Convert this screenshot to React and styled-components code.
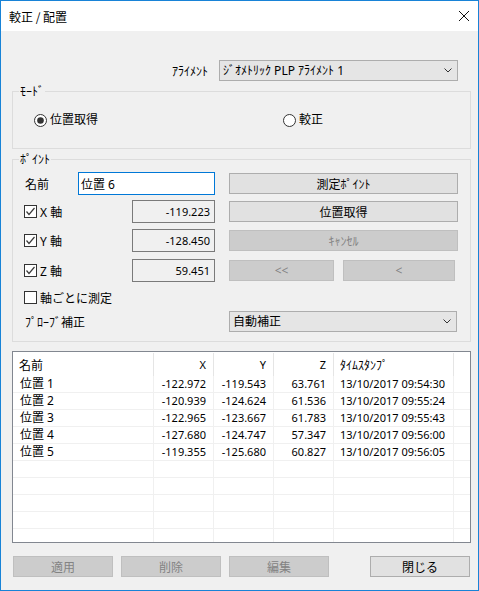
import React from "react"
import styled, { createGlobalStyle } from "styled-components"

const points = [
  { name: "位置 1", x: "-122.972", y: "-119.543", z: "63.761", time: "13/10/2017 09:54:30" },
  { name: "位置 2", x: "-120.939", y: "-124.624", z: "61.536", time: "13/10/2017 09:55:24" },
  { name: "位置 3", x: "-122.965", y: "-123.667", z: "61.783", time: "13/10/2017 09:55:43" },
  { name: "位置 4", x: "-127.680", y: "-124.747", z: "57.347", time: "13/10/2017 09:56:00" },
  { name: "位置 5", x: "-119.355", y: "-125.680", z: "60.827", time: "13/10/2017 09:56:05" },
]

const axes = [
  { label: "X 軸", value: "-119.223" },
  { label: "Y 軸", value: "-128.450" },
  { label: "Z 軸", value: "59.451" },
]

const Chevron = () => (
  <svg width="8" height="5" viewBox="0 0 8 5">
    <polyline points="0.5,0.5 4,4 7.5,0.5" fill="none" stroke="#333" strokeWidth="1" />
  </svg>
)

const CloseIcon = () => (
  <svg width="10" height="10" viewBox="0 0 10 10">
    <path d="M0 0 L10 10 M10 0 L0 10" stroke="#111" strokeWidth="1" />
  </svg>
)

const Check = ({ checked }) => (
  <CheckBox>
    {checked && (
      <svg width="11" height="11" viewBox="0 0 11 11">
        <polyline points="1.5,5.5 4,8.5 9.5,2" fill="none" stroke="#3a3a3a" strokeWidth="1.2" />
      </svg>
    )}
  </CheckBox>
)

const Radio = ({ checked }) => (
  <svg width="13" height="13" viewBox="0 0 13 13">
    <circle cx="6.5" cy="6.5" r="6" fill="#fff" stroke="#333" strokeWidth="1" />
    {checked && <circle cx="6.5" cy="6.5" r="3.3" fill="#333" />}
  </svg>
)

const App = () => {
  const empty = Array.from({ length: 6 })
  return (
    <Window>
      <GlobalStyle />
      <TitleBar>
        <span>較正 / 配置</span>
        <CloseIcon />
      </TitleBar>
      <Body>
        <AlignRow>
          <span>ｱﾗｲﾒﾝﾄ</span>
          <Combo $w={239}>
            <span>ｼﾞｵﾒﾄﾘｯｸ PLP ｱﾗｲﾒﾝﾄ 1</span>
            <Chevron />
          </Combo>
        </AlignRow>

        <Group $h={58}>
          <Legend>ﾓｰﾄﾞ</Legend>
          <ModeGrid>
            <RadioLabel>
              <Radio checked />
              位置取得
            </RadioLabel>
            <RadioLabel>
              <Radio />
              較正
            </RadioLabel>
          </ModeGrid>
        </Group>

        <Group $h={183}>
          <Legend>ﾎﾟｲﾝﾄ</Legend>
          <PointGrid>
            <NameLabel>名前</NameLabel>
            <NameInput>位置 6</NameInput>
            <Button>測定ﾎﾟｲﾝﾄ</Button>

            {axes.map((a, i) => (
              <React.Fragment key={a.label}>
                <CheckLabel $h={23}>
                  <Check checked />
                  {a.label}
                </CheckLabel>
                <Readout>{a.value}</Readout>
                {i === 0 && <Button>位置取得</Button>}
                {i === 1 && <Button $disabled>ｷｬﾝｾﾙ</Button>}
                {i === 2 && (
                  <Pair>
                    <Button $disabled>&lt;&lt;</Button>
                    <Button $disabled>&lt;</Button>
                  </Pair>
                )}
              </React.Fragment>
            ))}

            <CheckLabel $h={17}>
              <Check />
              軸ごとに測定
            </CheckLabel>

            <ProbeLabel>ﾌﾟﾛｰﾌﾞ補正</ProbeLabel>
            <ProbeCombo $w={228}>
              <span>自動補正</span>
              <Chevron />
            </ProbeCombo>
          </PointGrid>
        </Group>

        <Table>
          <HeadRow>
            <HeadCell>名前</HeadCell>
            <HeadCell $right>X</HeadCell>
            <HeadCell $right>Y</HeadCell>
            <HeadCell $right>Z</HeadCell>
            <HeadCell>ﾀｲﾑｽﾀﾝﾌﾟ</HeadCell>
            <HeadCell $last />
          </HeadRow>
          {points.map((p) => (
            <Row key={p.name}>
              <Cell>{p.name}</Cell>
              <Cell $num>{p.x}</Cell>
              <Cell $num>{p.y}</Cell>
              <Cell $num>{p.z}</Cell>
              <Cell $time>{p.time}</Cell>
              <Cell />
            </Row>
          ))}
          {empty.map((_, i) => (
            <Row key={i}>
              <Cell />
              <Cell />
              <Cell />
              <Cell />
              <Cell />
              <Cell />
            </Row>
          ))}
        </Table>

        <Footer>
          <Button $disabled $w={100}>適用</Button>
          <Button $disabled $w={100}>削除</Button>
          <Button $disabled $w={100}>編集</Button>
          <CloseButton $w={100}>閉じる</CloseButton>
        </Footer>
      </Body>
    </Window>
  )
}

export default App

const GlobalStyle = createGlobalStyle`
  html, body {
    margin: 0;
    padding: 0;
    background: #fff;
  }
  body {
    font-family: "Noto Sans", "Noto Sans CJK JP", sans-serif;
    font-size: 12px;
    color: #000;
  }
  * {
    box-sizing: border-box;
  }
`

const Window = styled.div`
  width: 479px;
  height: 591px;
  border: 1px solid #1883d7;
  background: #f0f0f0;
  display: flex;
  flex-direction: column;
  overflow: hidden;
`

const TitleBar = styled.div`
  height: 30px;
  flex: none;
  background: #fff;
  display: flex;
  align-items: center;
  justify-content: space-between;
  padding: 0 9px 0 8px;
  font-family: "Noto Sans CJK JP", sans-serif;
  font-size: 12px;
`

const Body = styled.div`
  flex: 1;
  display: flex;
  flex-direction: column;
  padding: 0 7px 0 11px;
`

const AlignRow = styled.div`
  margin-top: 29px;
  height: 21px;
  display: flex;
  align-items: center;
  justify-content: flex-end;
  gap: 11px;
  padding-right: 13px;
`

const Combo = styled.div`
  width: ${(p) => p.$w}px;
  height: 21px;
  border: 1px solid #adadad;
  background: #e5e5e5;
  display: flex;
  align-items: center;
  justify-content: space-between;
  padding: 0 5px 0 3px;
  line-height: 19px;
`

const Group = styled.div`
  position: relative;
  margin-top: 10px;
  height: ${(p) => p.$h}px;
  border: 1px solid #dcdcdc;
  flex: none;
`

const Legend = styled.span`
  position: absolute;
  top: -7px;
  left: 6px;
  padding: 0 1px;
  background: #f0f0f0;
  line-height: 13px;
`

const ModeGrid = styled.div`
  height: 100%;
  display: grid;
  grid-template-columns: 249px auto;
  align-items: center;
  padding-left: 21px;
`

const RadioLabel = styled.div`
  display: flex;
  align-items: center;
  gap: 3px;
  line-height: 14px;
`

const PointGrid = styled.div`
  display: grid;
  grid-template-columns: 54px 54px 97px 229px;
  grid-template-rows: 28px 29px 30px 30px 22px 21px;
  align-items: start;
  padding: 12px 0 9px 11px;
`

const NameLabel = styled.div`
  height: 23px;
  display: flex;
  align-items: center;
  padding-left: 1px;
`

const NameInput = styled.div`
  grid-column: 2 / span 2;
  width: 137px;
  height: 23px;
  border: 1px solid #0078d7;
  background: #fff;
  padding-left: 2px;
  display: flex;
  align-items: center;
`

const Button = styled.div`
  width: ${(p) => (p.$w ? `${p.$w}px` : "100%")};
  height: 21px;
  margin-top: 1px;
  display: flex;
  align-items: center;
  justify-content: center;
  border: 1px solid ${(p) => (p.$disabled ? "#bfbfbf" : "#adadad")};
  background: ${(p) => (p.$disabled ? "#cccccc" : "#e1e1e1")};
  color: ${(p) => (p.$disabled ? "#838383" : "#000")};
`

const CloseButton = styled(Button)`
  margin-left: auto;
`

const Pair = styled.div`
  display: grid;
  grid-template-columns: 105px 112px;
  gap: 9px;
`

const CheckLabel = styled.div`
  grid-column: 1 / span 2;
  height: ${(p) => p.$h}px;
  display: flex;
  align-items: center;
  gap: 3px;
`

const CheckBox = styled.span`
  width: 13px;
  height: 13px;
  border: 1px solid #333;
  background: #fff;
  display: flex;
  align-items: center;
  justify-content: center;
`

const Readout = styled.div`
  grid-column: 3;
  width: 83px;
  height: 23px;
  border: 1px solid #7a7a7a;
  background: #f0f0f0;
  display: flex;
  align-items: center;
  justify-content: flex-end;
  padding-right: 4px;
  font-size: 11px;
`

const ProbeLabel = styled.div`
  grid-column: 1 / span 3;
  align-self: center;
  padding-left: 1px;
`

const ProbeCombo = styled(Combo)`
  grid-column: 4;
`

const Table = styled.div`
  margin-top: 9px;
  height: 192px;
  flex: none;
  border: 1px solid #828790;
  background: #fff;
  overflow: hidden;
`

const columns = "141px 60px 60px 60px 120px 1fr"

const HeadRow = styled.div`
  display: grid;
  grid-template-columns: ${columns};
  height: 24px;
`

const HeadCell = styled.div`
  border-right: ${(p) => (p.$last ? "none" : "1px solid #e5e5e5")};
  margin-top: 1px;
  display: flex;
  align-items: center;
  justify-content: ${(p) => (p.$right ? "flex-end" : "flex-start")};
  padding: ${(p) => (p.$right ? "0 7px 0 0" : "0 0 0 6px")};
  font-size: ${(p) => (p.$right ? "11px" : "12px")};
`

const Row = styled.div`
  display: grid;
  grid-template-columns: ${columns};
  height: 17px;
  border-bottom: 1px solid #f0f0f0;
`

const Cell = styled.div`
  border-right: 1px solid #f0f0f0;
  line-height: 16px;
  white-space: nowrap;
  text-align: ${(p) => (p.$num ? "right" : "left")};
  padding: ${(p) => (p.$num ? "0 7px 0 0" : p.$time ? "0 0 0 6px" : "0 0 0 7px")};
  font-size: ${(p) => (p.$num || p.$time ? "11px" : "12px")};

  &:last-child {
    border-right: none;
  }
`

const Footer = styled.div`
  margin-top: 12px;
  display: flex;
  gap: 8px;
  padding: 0 1px;
`
